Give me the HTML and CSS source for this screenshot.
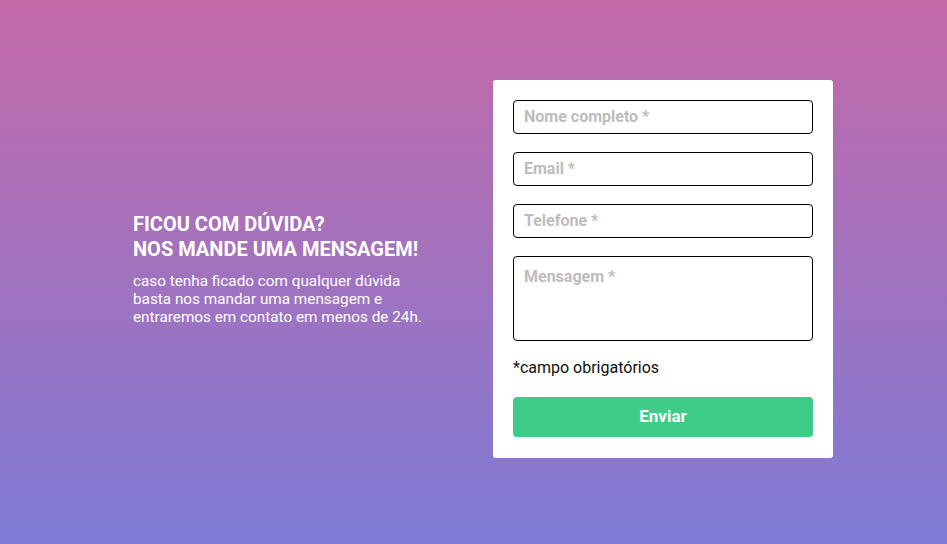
FILE: index.html
```html
<!DOCTYPE html>
<html lang="pt-BR">
<head>
<meta charset="utf-8">
<title>Contato</title>
<link rel="stylesheet" href="styles.css">
</head>
<body>
<main class="page">
  <section class="intro">
    <h1 class="intro-title">FICOU COM DÚVIDA?<br>NOS MANDE UMA MENSAGEM!</h1>
    <p class="intro-text">caso tenha ficado com qualquer dúvida basta nos mandar uma mensagem e entraremos em contato em menos de 24h.</p>
  </section>
  <form class="card">
    <input class="field" type="text" placeholder="Nome completo *">
    <input class="field" type="email" placeholder="Email *">
    <input class="field" type="tel" placeholder="Telefone *">
    <textarea class="field field-area" placeholder="Mensagem *"></textarea>
    <p class="note">*campo obrigatórios</p>
    <button class="submit" type="button">Enviar</button>
  </form>
</main>
</body>
</html>
```

FILE: styles.css
```css
* { box-sizing: border-box; }
html, body { margin: 0; height: 100%; }
body {
  font-family: Roboto, "Liberation Sans", sans-serif;
  background: linear-gradient(180deg, #c46aa8 0%, #7e7bd5 100%);
  overflow: hidden;
}
.page {
  display: flex;
  align-items: center;
  height: 544px;
  padding: 0 0 6px 133px;
  gap: 60px;
}
.intro {
  width: 300px;
  color: #fff;
}
.intro-title {
  margin: 0 0 10px;
  font-size: 20px;
  line-height: 25px;
  font-weight: 700;
}
.intro-text {
  margin: 0;
  font-size: 15.3px;
  line-height: 18px;
  width: 295px;
}
.card {
  width: 340px;
  background: #fff;
  border-radius: 3px;
  padding: 20px 20px 21px;
  display: flex;
  flex-direction: column;
}
.field {
  display: block;
  width: 300px;
  height: 34px;
  border: 1px solid #000;
  border-radius: 4px;
  padding: 0 10px 1px;
  font-family: inherit;
  font-size: 16px;
  font-weight: 700;
  margin: 0 0 18px;
  outline: none;
}
.field::placeholder { color: #bdbdbd; }
.field-area {
  height: 85px;
  padding-top: 10px;
  resize: none;
  margin-bottom: 0;
}
.note {
  margin: 17px 0 0;
  font-size: 16px;
  line-height: 20px;
  color: #111;
}
.submit {
  margin-top: 19px;
  height: 40px;
  border: none;
  border-radius: 4px;
  background: #3ccc88;
  color: #fff;
  font-family: inherit;
  font-size: 17px;
  font-weight: 700;
  padding: 0 0 2px;
}
```
